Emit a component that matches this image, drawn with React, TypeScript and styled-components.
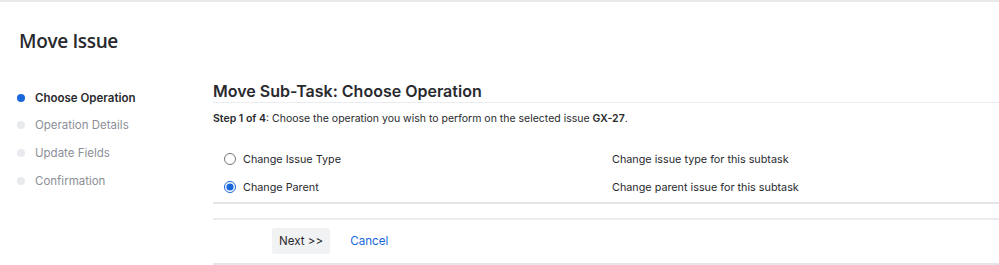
import React from "react";
import styled, { createGlobalStyle } from "styled-components";

const GlobalStyle = createGlobalStyle`
  html, body {
    margin: 0;
    padding: 0;
    background: #fff;
  }
  body {
    font-family: Inter, "Noto Sans", sans-serif;
    color: #292a2e;
  }
`;

const steps = [
  "Choose Operation",
  "Operation Details",
  "Update Fields",
  "Confirmation",
];

const operations = [
  {
    id: "type",
    label: "Change Issue Type",
    description: "Change issue type for this subtask",
  },
  {
    id: "parent",
    label: "Change Parent",
    description: "Change parent issue for this subtask",
  },
];

export default function App() {
  return (
    <Page>
      <GlobalStyle />
      <Title>Move Issue</Title>
      <Body>
        <Sidebar>
          {steps.map((step, i) => (
            <StepItem key={step} $active={i === 0}>
              <Dot $active={i === 0} />
              {step}
            </StepItem>
          ))}
        </Sidebar>
        <Main>
          <Heading>Move Sub-Task: Choose Operation</Heading>
          <Intro>
            <strong>Step 1 of 4</strong>: Choose the operation you wish to
            perform on the selected issue <strong>GX-27</strong>.
          </Intro>
          <OptionTable>
            {operations.map((op) => (
              <OptionRow key={op.id}>
                <OptionLabel>
                  <Radio
                    type="radio"
                    name="operation"
                    defaultChecked={op.id === "parent"}
                  />
                  {op.label}
                </OptionLabel>
                <OptionDescription>{op.description}</OptionDescription>
              </OptionRow>
            ))}
          </OptionTable>
          <Actions>
            <Button>Next &gt;&gt;</Button>
            <CancelLink href="#">Cancel</CancelLink>
          </Actions>
        </Main>
      </Body>
    </Page>
  );
}

const Page = styled.div`
  border-top: 2px solid #e8e8e8;
  height: 263px;
  overflow: hidden;
`;

const Title = styled.h1`
  margin: 0;
  padding: 26px 0 0 19px;
  font-family: "Open Sans", sans-serif;
  font-size: 19px;
  font-weight: 600;
  line-height: 26px;
  letter-spacing: -0.35px;
  color: #292a2e;
`;

const Body = styled.div`
  display: flex;
  padding-top: 26px;
`;

const Sidebar = styled.ul`
  list-style: none;
  margin: 0;
  padding: 4px 0 0 17px;
  width: 213px;
  flex-shrink: 0;
  box-sizing: border-box;
`;

const StepItem = styled.li<{ $active?: boolean }>`
  display: flex;
  align-items: center;
  gap: 10px;
  height: 27.6px;
  font-size: 11.5px;
  font-weight: ${(p) => (p.$active ? 600 : 400)};
  color: ${(p) => (p.$active ? "#292a2e" : "#8c8f97")};
`;

const Dot = styled.span<{ $active?: boolean }>`
  width: 8px;
  height: 8px;
  border-radius: 50%;
  background: ${(p) => (p.$active ? "#1868db" : "#e9eaee")};
`;

const Main = styled.div`
  flex: 1;
`;

const Heading = styled.h2`
  margin: 0;
  font-size: 16px;
  font-weight: 600;
  line-height: 22px;
  border-bottom: 1px solid #ebecf0;
  color: #292a2e;
`;

const Intro = styled.p`
  margin: 8px 0 0;
  font-size: 10.5px;
  line-height: 16px;
  color: #292a2e;

  strong {
    font-weight: 600;
  }
`;

const OptionTable = styled.div`
  margin-top: 18px;
  padding: 0 0 1px 1px;
  border-bottom: 2px solid #e4e5e9;
`;

const OptionRow = styled.div`
  display: grid;
  grid-template-columns: 388px 1fr;
  align-items: center;
  height: 28px;
  padding-left: 10px;
  font-size: 10.8px;
  color: #292a2e;
`;

const OptionLabel = styled.label`
  display: flex;
  align-items: center;
  gap: 7px;
`;

const Radio = styled.input`
  margin: 0;
  width: 12px;
  height: 12px;
  accent-color: #1868db;
`;

const OptionDescription = styled.span``;

const Actions = styled.div`
  margin-top: 14px;
  border-top: 2px solid #ebecf0;
  border-bottom: 2px solid #e4e5e9;
  display: flex;
  align-items: center;
  gap: 20px;
  padding: 8px 0 9px 59px;
`;

const Button = styled.button`
  font-family: Inter, sans-serif;
  font-size: 11.6px;
  color: #292a2e;
  background: #f1f2f4;
  border: none;
  border-radius: 3px;
  height: 26px;
  padding: 0 7px;
`;

const CancelLink = styled.a`
  font-size: 11.6px;
  color: #1868db;
  text-decoration: none;
`;
